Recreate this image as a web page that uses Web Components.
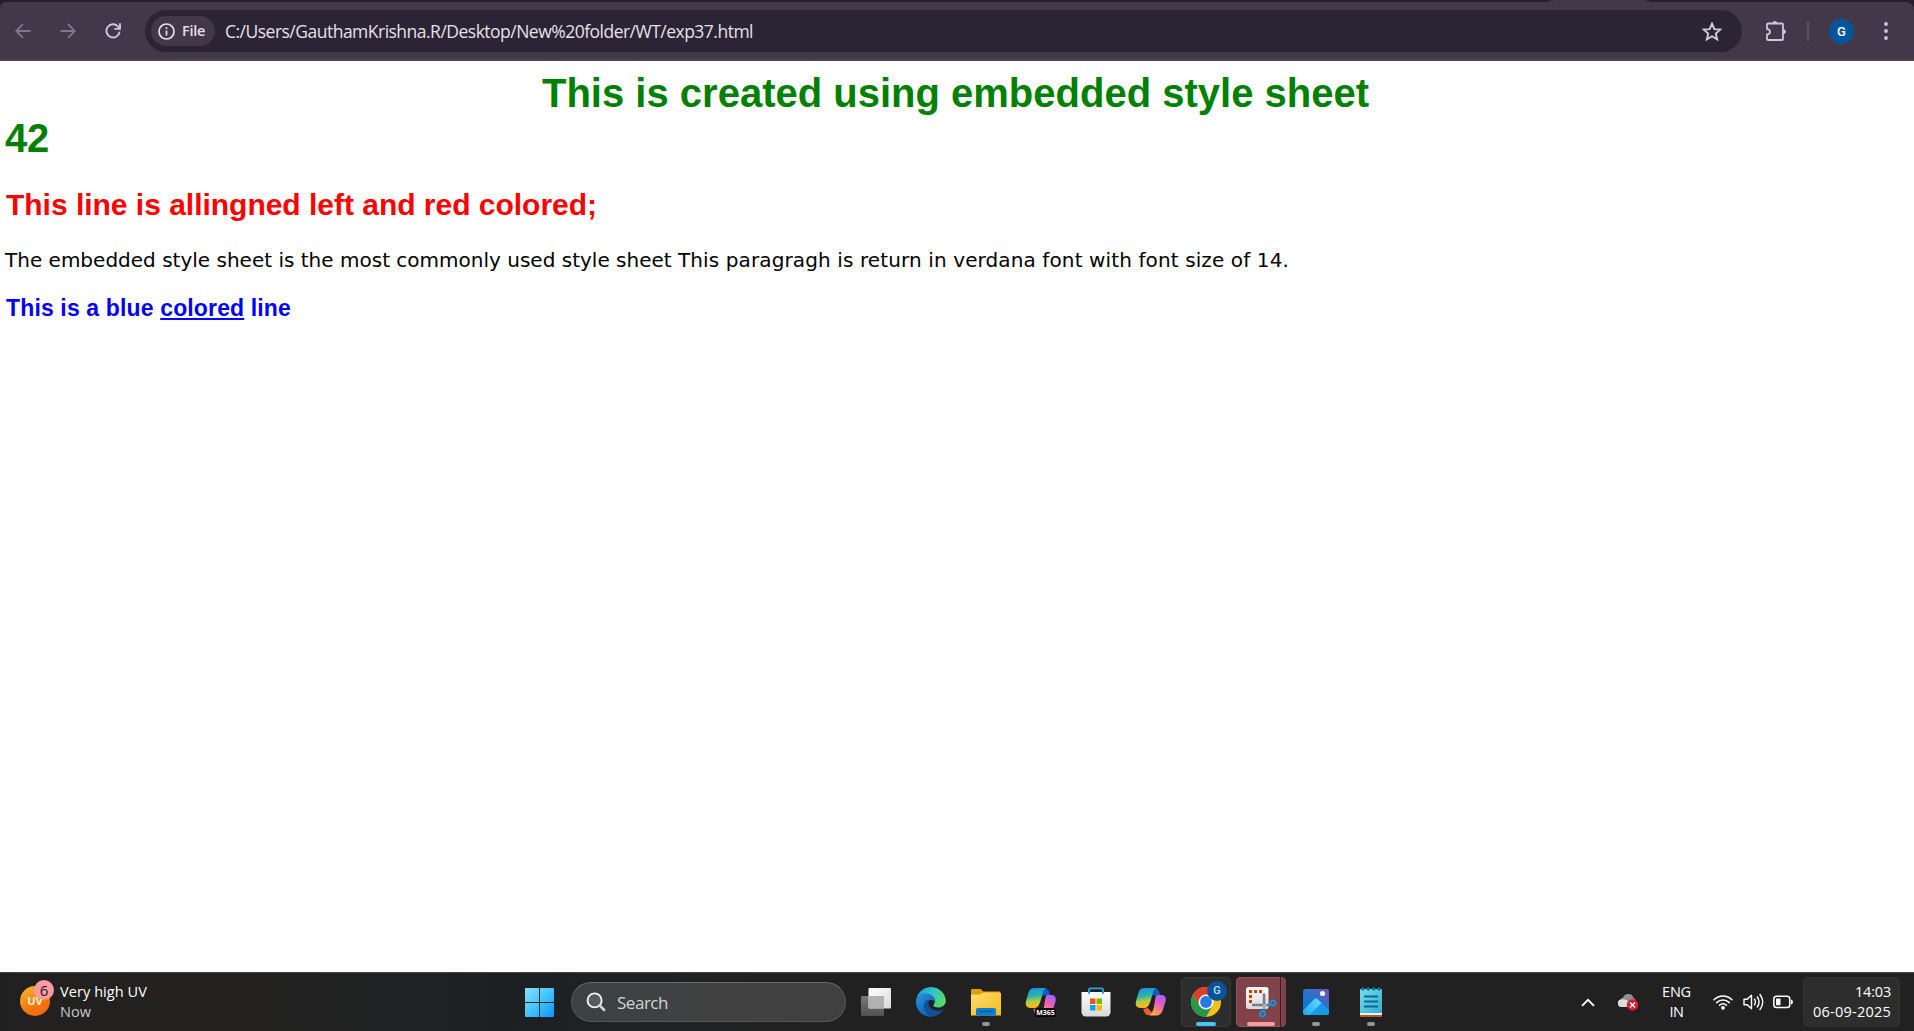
<!DOCTYPE html>
<html lang="en">
<head>
<meta charset="utf-8">
<title>exp37.html</title>
<style>
html,body{margin:0;height:100%;overflow:hidden;background:#fff}
</style>
</head>
<body>
<desktop-screen></desktop-screen>
<script>
const define = (name, html, after) => customElements.define(name, class extends HTMLElement {
  connectedCallback() {
    if (this.shadowRoot) return;
    const root = this.attachShadow({mode: 'open'});
    root.innerHTML = typeof html === 'function' ? html(this) : html;
    if (after) after(this, root);
  }
});

/* Text whose tracking is adjusted so that the run takes the width "w". */
define('tracked-text', el => `<style>:host{display:block;white-space:pre;width:${el.getAttribute('w')}px;flex:none}span{display:inline-block}</style><span><slot></slot></span>`,
(el, root) => {
  const span = root.querySelector('span'), w = +el.getAttribute('w');
  const fit = () => {
    span.style.letterSpacing = '0';
    const n = el.textContent.length;
    span.style.letterSpacing = ((w - span.getBoundingClientRect().width) / n).toFixed(4) + 'px';
  };
  requestAnimationFrame(fit);
});

const icons = {
back: ['0 0 16 16', `<path d="M15.5 8H1.5M8 1.2L1.2 8l6.8 6.8" fill="none" stroke="#81768a" stroke-width="1.8"/>`],
forward: ['0 0 16 16', `<path d="M.5 8h14M8 1.2L14.8 8 8 14.8" fill="none" stroke="#81768a" stroke-width="1.8"/>`],
reload: ['0 0 16 16', `<path d="M14.6 8.6A6.6 6.6 0 1 1 12.9 3.4L15 5.5" fill="none" stroke="#cfc4dc" stroke-width="1.9"/><path d="M15 .3v5.6H9.4" fill="none" stroke="#cfc4dc" stroke-width="1.9"/>`],
info: ['0 0 17 17', `<circle cx="8.5" cy="8.5" r="7.5" fill="none" stroke="#e6dfeb" stroke-width="1.7"/><path d="M8.5 7.5v5M8.5 4.3v1.8" stroke="#e6dfeb" stroke-width="1.7"/>`],
star: ['0 0 20 19', `<path d="M10 1.6l2.35 5.5 5.95.5-4.5 3.95 1.35 5.85L10 14.3l-5.15 3.1L6.2 11.55 1.7 7.6l5.95-.5z" fill="none" stroke="#d2cad8" stroke-width="1.9" stroke-linejoin="miter"/>`],
puzzle: ['0 0 22 22', `<path d="M2 4.500a1 1 0 0 1 1-1H17a1 1 0 0 1 1 1V19a1 1 0 0 1-1 1H3a1 1 0 0 1-1-1v-4.500c4-.5 4-5 0-5.500z" fill="none" stroke="#cfc4dc" stroke-width="1.8" stroke-linejoin="round"/><path d="M7.500 3.200a2.300 2.300 0 0 1 4.600 0zM18.500 9.300a2.400 2.400 0 0 1 0 4.800z" fill="#cfc4dc"/>`],
dots: ['0 0 4 18', `<g fill="#cfc4dc"><circle cx="2" cy="2" r="1.9"/><circle cx="2" cy="9" r="1.9"/><circle cx="2" cy="16" r="1.9"/></g>`],
start: ['0 0 29 29', `<linearGradient id="g" x1="0" y1="0" x2="29" y2="29" gradientUnits="userSpaceOnUse"><stop stop-color="#89dfff"/><stop offset=".5" stop-color="#42c4ff"/><stop offset="1" stop-color="#0a95fa"/></linearGradient><path fill="url(#g)" d="M1 0h13v14H0V1a1 1 0 0 1 1-1zm14 0h13a1 1 0 0 1 1 1v13H15zM0 15h14v14H1a1 1 0 0 1-1-1zm15 0h14v13a1 1 0 0 1-1 1H15z"/>`],
search: ['0 0 20 20', `<circle cx="8.6" cy="8.4" r="7" fill="#8a8d90" fill-opacity=".35" stroke="#f1f1f1" stroke-width="1.9"/><path d="M13.6 13.4l4.6 4.6" stroke="#d7d7d7" stroke-width="2.5" stroke-linecap="round"/>`],
taskview: ['0 0 50 50', `<linearGradient id="a" x1="0" y1="0" x2="1" y2="1"><stop stop-color="#fff"/><stop offset="1" stop-color="#d9d9d9"/></linearGradient><linearGradient id="b" x1="0" y1="0" x2="0" y2="1"><stop stop-color="#777"/><stop offset="1" stop-color="#525252"/></linearGradient><rect x="10" y="19" width="23" height="20" rx="1" fill="url(#b)"/><rect x="17.5" y="11" width="22.5" height="20.5" rx="1" fill="url(#a)"/><path d="M18 19h15v12H18z" fill="#b2b2b2"/>`],
edge: ['0 0 50 50', `<defs><linearGradient id="a" x1="10" y1="12" x2="40" y2="27" gradientUnits="userSpaceOnUse"><stop stop-color="#229bd9"/><stop offset=".45" stop-color="#2dc1cf"/><stop offset="1" stop-color="#64dd51"/></linearGradient><linearGradient id="b" x1="10" y1="20" x2="28" y2="40" gradientUnits="userSpaceOnUse"><stop stop-color="#2490df"/><stop offset="1" stop-color="#0756a7"/></linearGradient><clipPath id="c"><circle cx="25" cy="25" r="15"/></clipPath></defs><g clip-path="url(#c)"><path d="M10 24C11 14 17 10 25 10c9 0 15 6 15 13 0 5-4 7.5-8 7.5-4.5 0-5.5-1.7-4-3.4 3-4-1-8.3-6-8.3-5 0-9.500 2-12 5.500z" fill="url(#a)"/><path d="M10 25c0-7 6-9.500 11-8.500 6 1 8.500 4 7.500 8.500-2-3.500-8-3-9.500 1.500-1.500 5 2 11 8 13.500h-17z" fill="url(#b)"/><path d="M21 23c-3 2-4.500 6-2 10.500C21 38 25 40 29 40l9-6.600c.5-.9-.3-1.400-1-.9-6 3-14 0-14.500-5.500-.1-1.500.4-2.800 1.200-4z" fill="#114f9b"/></g>`],
folder: ['0 0 50 50', `<linearGradient id="a" x1="0" y1="0" x2="1" y2="1"><stop stop-color="#ffdc70"/><stop offset="1" stop-color="#f8b916"/></linearGradient><path d="M10 13a1 1 0 0 1 1-1h8.500l3 2.500H39V25H10z" fill="#dda105"/><path d="M10 17.500h9.500l3-2H39a1 1 0 0 1 1 1V38.500H10z" fill="url(#a)"/><path d="M15 38.500V33a2 2 0 0 1 2-2h16a2 2 0 0 1 2 2v5.500z" fill="#087fd3"/><path d="M18.500 34.500h13" stroke="#05579b" stroke-width="1.200" stroke-linecap="round"/>`],
copilot: ['0 0 50 50', `<linearGradient id="a" x1="0" y1="0" x2=".15" y2="1"><stop stop-color="#168bf0"/><stop offset=".45" stop-color="#2db5a1"/><stop offset=".72" stop-color="#b7cc42"/><stop offset="1" stop-color="#ffb515"/></linearGradient><linearGradient id="b" x1=".8" y1="0" x2=".3" y2="1"><stop stop-color="#9b68ed"/><stop offset=".4" stop-color="#e35ac5"/><stop offset=".75" stop-color="#ff886e"/><stop offset="1" stop-color="#ffae59"/></linearGradient><path d="M26 11c5 0 6.500 1 7.500 5l.7 2.500h-8L21 31z" fill="#155bc8"/><path d="M17 32l5-1 6 7h-5c-4 0-4-2-6-6z" fill="#ee602b"/><path d="M19 11h11c-2.200 1-3 4-4 7.500-1.500 6-3 12.500-7.500 12.500h-4c-4 0-5.500-3-4.500-7l2.500-8.500C13.600 12.200 15.500 11 19 11z" fill="url(#a)"/><path d="M31 18h5c3 0 4.500 3 3.500 6.500L37 32.500c-1.300 4-3.500 6-7 6h-7c2.700-.8 3.800-4.500 4.800-8C29 25.500 29 19 31 18z" fill="url(#b)"/>`],
store: ['0 0 50 50', `<linearGradient id="a" x1="0" y1="0" x2="0" y2="1"><stop stop-color="#fff"/><stop offset="1" stop-color="#d8d8d8"/></linearGradient><path d="M10.500 15h29v20a4.500 4.500 0 0 1-4.500 4.500H15a4.500 4.500 0 0 1-4.500-4.500z" fill="url(#a)"/><path d="M18 17v-4.500a1.200 1.200 0 0 1 1.200-1.200h11.600a1.200 1.200 0 0 1 1.200 1.200V17" fill="none" stroke="#20a8e8" stroke-width="1.800"/><path fill="#f25022" d="M19 21.500h5.500V27H19z"/><path fill="#7fba00" d="M25.500 21.500H31V27h-5.500z"/><path fill="#00a4ef" d="M19 28h5.500v5.500H19z"/><path fill="#ffb900" d="M25.500 28H31v5.500h-5.500z"/>`],
chrome: ['0 0 50 50', `<circle cx="25" cy="25" r="15" fill="#fbc016"/><path d="M12 17.500A15 15 0 0 0 25 40l6.500-11.250L25 32.500l-6.500-3.750z" fill="#229a4b"/><path d="M12 17.500a15 15 0 0 1 26 0H25l-6.500 11.250z" fill="#e33b2e"/><circle cx="25" cy="25" r="7.500" fill="#fff"/><circle cx="25" cy="25" r="5.900" fill="#2878e7"/>`],
snip: ['0 0 50 50', `<linearGradient id="a" x1="0" y1="0" x2="0" y2="1"><stop stop-color="#fbfbfb"/><stop offset="1" stop-color="#d8dadd"/></linearGradient><rect x="10" y="10" width="22.500" height="22" rx="2.500" fill="url(#a)"/><g fill="#d83b01"><path d="M13 13h3v3h-3zM18 13h3v3h-3zM23 13h3v3h-3zM13 18h3v3h-3zM13 23h3v3h-3z"/></g><path d="M28 16.500l.2 14M16 28h18.500" stroke="#788089" stroke-width="2.600"/><path d="M28 27v7M27 28h7" stroke="#a6adb5" stroke-width="2"/><circle cx="26.500" cy="37" r="2.500" fill="none" stroke="#1593df" stroke-width="1.900"/><circle cx="37" cy="26" r="2.500" fill="none" stroke="#1593df" stroke-width="1.900"/><path d="M28 31.500v4M31 28h4" stroke="#1593df" stroke-width="2"/>`],
photos: ['0 0 50 50', `<linearGradient id="a" x1="0" y1="1" x2="1" y2="0"><stop stop-color="#0577cf"/><stop offset=".55" stop-color="#2d72cd"/><stop offset="1" stop-color="#7452b5"/></linearGradient><linearGradient id="b" x1="0" y1="1" x2="1" y2="0"><stop stop-color="#1ba5ee"/><stop offset="1" stop-color="#64e0fb"/></linearGradient><clipPath id="c"><rect x="12" y="12" width="26" height="26" rx="2.500"/></clipPath><g clip-path="url(#c)"><path fill="url(#a)" d="M12 12h26v26H12z"/><path d="M23 22.500q2-2 4 0L40 35.500V40H12z" fill="#169be9"/><path d="M23 22.500q2-2 4 0l3.500 3.500L18 38.500h-6v-5z" fill="url(#b)"/></g><circle cx="31.500" cy="16.500" r="2.600" fill="#eef2ff"/>`],
notepad: ['0 0 50 50', `<linearGradient id="a" x1="0" y1="0" x2="1" y2="1"><stop stop-color="#78def0"/><stop offset="1" stop-color="#35acd0"/></linearGradient><path d="M14 36h22v4H14z" fill="#b35d18"/><path d="M14 34h22v4H14z" fill="#eee"/><rect x="14" y="12" width="22" height="24" rx="1" fill="url(#a)"/><path d="M18 19.500h14M18 24.500h14M18 29.500h14" stroke="#086b91" stroke-width="1.800"/><g fill="#087ba5"><circle cx="17" cy="12" r="1.700"/><circle cx="22.300" cy="12" r="1.700"/><circle cx="27.700" cy="12" r="1.700"/><circle cx="33" cy="12" r="1.700"/></g>`],
chevron: ['0 0 14 9', `<path d="M1 7.800l6-6 6 6" fill="none" stroke="#fff" stroke-width="1.900"/>`],
cloud: ['0 0 21 17', `<path d="M5 3.500A5.500 5.500 0 0 1 15.500 4c2 .5 2.500 3 2 5l-12 4H3.500A3.500 3.500 0 0 1 1.500 7C2 5 3.500 4 5 3.500z" fill="#8f8f8f"/><path d="M3.500 5.500C7 4.500 9 7 12 7.500L14 13H3.500A3.500 3.500 0 0 1 3.500 5.500z" fill="#ddd"/><circle cx="14.500" cy="11" r="5.800" fill="#d91e31"/><path d="M12 8.500l5 5m0-5l-5 5" stroke="#fff" stroke-width="1.400"/>`],
wifi: ['0 0 20 16', `<g fill="none" stroke="#fff" stroke-width="1.500" stroke-linecap="round"><path d="M1 5.800a12.700 12.700 0 0 1 18 0"/><path d="M3.700 8.600a8.900 8.900 0 0 1 12.600 0"/><path d="M6.500 11.300a5 5 0 0 1 7 0"/></g><circle cx="10" cy="13.800" r="1.900" fill="#fff"/>`],
volume: ['0 0 21 18', `<g fill="none" stroke="#fff" stroke-width="1.400" stroke-linejoin="round" stroke-linecap="round"><path d="M1 6.300h3.200L8.500 2.200v13.600L4.200 11.700H1z"/><path d="M11.500 6.200q1.800 2.800 0 5.600M14.300 4q3.500 5 0 10M17 1.500q5.500 7.500 0 15"/></g>`],
battery: ['0 0 20 13', `<rect x=".8" y=".8" width="16" height="11.200" rx="2.800" fill="none" stroke="#fff" stroke-width="1.500"/><rect x="3" y="3" width="4.500" height="6.800" rx=".8" fill="#fff"/><path d="M18 4v5q2-.5 2-2.500T18 4z" fill="#fff"/>`]
};
define('ui-icon', el => { const i = icons[el.getAttribute('name')];
  return `<style>:host{display:block;flex:none;width:${el.getAttribute('w')}px;height:${el.getAttribute('h')}px}svg{display:block;width:100%;height:100%}</style><svg viewBox="${i[0]}">${i[1]}</svg>`; });

define('browser-toolbar', `<style>
:host{display:block;height:61px;box-sizing:border-box;padding-top:2px;background:#261d2e;font-family:"Open Sans","Noto Sans",sans-serif;position:relative}
.bar{height:59px;box-sizing:border-box;border-bottom:2px solid #4c454f;background:#42384a;border-radius:6px 8px 0 0;display:flex;align-items:center;padding:2px 0 1px 15px}
.nav{display:flex;gap:29px;width:130px;flex:none}
.omni{width:1597px;flex:none;height:42px;border-radius:21px;background:#2b2434;box-sizing:border-box;padding:0 20px 0 6px;display:flex;align-items:center}
.chip{width:64px;height:30px;border-radius:15px;background:#42384a;display:flex;align-items:center;gap:7px;padding-left:7px;box-sizing:border-box;color:#e6dfeb;font-size:14.500px;font-weight:600;line-height:30px}
.url{margin-left:10px;color:#e6e0ea;font-size:17.500px;line-height:30px;flex:1}
.tail{display:flex;align-items:center;margin-left:23px;flex:none}
.sep{width:2px;height:20px;background:#5a5062;margin:0 20px;border-radius:1px}
.av{width:25px;height:25px;border-radius:50%;background:#00569c;color:#fff;font:500 13px/25px Roboto,sans-serif;text-align:center;margin-right:30px}
.tab{position:absolute;left:1546px;top:0;width:106px;height:2px;background:#42384a;clip-path:polygon(8px 0,98px 0,100% 100%,0 100%)}
</style>
<div class="bar"><div class="nav"><ui-icon name="back" w="16" h="16"></ui-icon><ui-icon name="forward" w="16" h="16"></ui-icon><ui-icon name="reload" w="16" h="16"></ui-icon></div>
<div class="omni"><div class="chip"><ui-icon name="info" w="17" h="17"></ui-icon><tracked-text w="23">File</tracked-text></div><div class="url"><tracked-text w="528">C:/Users/GauthamKrishna.R/Desktop/New%20folder/WT/exp37.html</tracked-text></div><ui-icon name="star" w="20" h="19"></ui-icon></div>
<div class="tail"><ui-icon name="puzzle" w="22" h="22"></ui-icon><div class="sep"></div><div class="av">G</div><ui-icon name="dots" w="4" h="18"></ui-icon></div></div><div class="tab"></div>`);

define('styled-document', `<style>
:host{display:block;height:911px;background:#fff;box-sizing:border-box;padding:10px 5px 0;font-family:"Liberation Sans",Arial,sans-serif}
h1,h2,h4,p{margin:0}
h1{color:green;font-size:40px;line-height:45px}
.c{display:flex;justify-content:center;padding-right:3px}
h2{color:red;font-size:30px;line-height:34px;margin:27px 0 0 1px}
p{display:flex;font-family:Verdana,"DejaVu Sans",sans-serif;font-size:20px;line-height:26px;margin-top:25px;color:#000}
h4{color:#00f;font-size:23px;line-height:26px;margin:22px 0 0 1px}
u{text-decoration-thickness:2px;text-underline-offset:2px}
</style>
<h1><div class="c"><tracked-text w="827">This is created using embedded style sheet</tracked-text></div><tracked-text w="44">42</tracked-text></h1>
<h2><tracked-text w="591">This line is allingned left and red colored;</tracked-text></h2>
<p><tracked-text w="673">The embedded style sheet is the most commonly used style sheet </tracked-text><tracked-text w="611">This paragragh is return in verdana font with font size of 14.</tracked-text></p>
<h4><tracked-text w="285">This is a blue <u>colored</u> line</tracked-text></h4>`);

define('task-button', el => `<style>
:host{display:flex;flex:none;width:55px;height:58px;justify-content:center;align-items:center}
.tile{position:relative;width:50px;height:50px;box-sizing:border-box;border-radius:5px}
.active{background:#2e2d2d;box-shadow:inset 0 0 0 1px #393838}
.alert{background:#804349;box-shadow:inset 0 0 0 1px #92555b}
.alert::after{content:"";position:absolute;left:44px;top:0;width:5px;height:50px;border-left:1px solid #342427;border-radius:0 5px 5px 0;background:#804349}
.mark{position:absolute;bottom:1px;left:50%;height:4px;border-radius:2px;transform:translateX(-50%);width:8px;background:#959595}
.active .mark{width:20px;background:#4cc2ff}.alert .mark{width:28px;background:#ff99a4}
</style><div class="tile ${el.getAttribute('state') || ''}"><ui-icon name="${el.getAttribute('icon')}" w="50" h="50"></ui-icon>${el.hasAttribute('open') ? '<div class="mark"></div>' : ''}<slot></slot></div>`);

define('task-bar', `<style>
:host{display:flex;height:59px;box-sizing:border-box;border-top:1px solid #484848;background:linear-gradient(90deg,#212020 0,#242220 170px,#212121 320px,#1d2022 500px,#1e2225 620px,#212121 760px,#212121);color:#fff;font-family:"Open Sans","Noto Sans",sans-serif;font-size:14.500px;line-height:20px;align-items:center}
.weather{display:flex;width:525px;flex:none;align-items:center}
.uv{position:relative;margin-left:20px;width:30px;height:30px;border-radius:50%;background:linear-gradient(150deg,#f5b735,#f5730b 65%,#ee650a);font:700 11px/30px "Open Sans",sans-serif;text-align:center;color:#fff0cf;margin-right:10px;margin-top:-3px}
.six{position:absolute;left:14px;top:-6px;width:20px;height:20px;border-radius:50%;background:#ff99a4;color:#241c1e;font:15px/20px "Open Sans",sans-serif}
.sub{color:#c8c8c8}
.lines{height:40px;margin-top:-1px}
.search{width:275px;flex:none;height:40px;border-radius:20px;box-sizing:border-box;border:1px solid #545555;border-top-color:#686a6b;margin-left:17px;background:linear-gradient(90deg,#3b4144,#414141 50%,#404040);display:flex;align-items:center;padding-left:14px;gap:11px;font-size:17px;color:#d4d4d4;line-height:30px}
.search tracked-text{padding-top:1px}
.apps{display:flex;margin-left:2.500px;width:550px;flex:none}
.b{position:absolute;left:26px;top:4px;width:20px;height:20px;border-radius:50%;background:#07549a;color:#c5dff7;font:500 11px/20px Roboto,sans-serif;text-align:center}
.m{position:absolute;left:19px;top:31px;width:21px;height:9px;border-radius:2px;background:#080808;color:#fff;font:700 7px/9px "Open Sans",sans-serif;text-align:center}
.tray{display:flex;align-items:center;margin-left:182.500px;flex:none}
.tray .lines{margin-top:0}
.clock{width:97px;height:50px;border-radius:5px;background:#2d2d2d;box-shadow:inset 0 0 0 1px #323232;margin-left:10px;box-sizing:border-box;padding:5px 9px 0 0;display:flex;flex-direction:column;align-items:flex-end}
</style>
<div class="weather"><div class="uv">UV<div class="six">6</div></div><div class="lines"><tracked-text w="87">Very high UV</tracked-text><tracked-text w="31" class="sub">Now</tracked-text></div></div>
<ui-icon name="start" w="29" h="29"></ui-icon>
<div class="search"><ui-icon name="search" w="20" h="20"></ui-icon><tracked-text w="51">Search</tracked-text></div>
<div class="apps"><task-button icon="taskview"></task-button><task-button icon="edge"></task-button><task-button icon="folder" open></task-button><task-button icon="copilot"><div class="m">M365</div></task-button><task-button icon="store"></task-button><task-button icon="copilot"></task-button><task-button icon="chrome" state="active" open><div class="b">G</div></task-button><task-button icon="snip" state="alert" open></task-button><task-button icon="photos" open></task-button><task-button icon="notepad" open></task-button></div>
<div class="tray"><ui-icon name="chevron" w="14" h="9"></ui-icon><ui-icon name="cloud" w="21" h="17" style="margin-left:23px"></ui-icon>
<div class="lines" style="margin-left:23px;display:flex;flex-direction:column;align-items:center"><tracked-text w="29">ENG</tracked-text><tracked-text w="14">IN</tracked-text></div>
<ui-icon name="wifi" w="20" h="16" style="margin-left:22px"></ui-icon><ui-icon name="volume" w="21" h="18" style="margin-left:10px"></ui-icon><ui-icon name="battery" w="20" h="14" style="margin-left:9px"></ui-icon>
<div class="clock"><tracked-text w="36">14:03</tracked-text><tracked-text w="78">06-09-2025</tracked-text></div></div>`);

define('desktop-screen', `<style>:host{display:flex;flex-direction:column;width:1914px;height:1031px;overflow:hidden}</style><browser-toolbar></browser-toolbar><styled-document></styled-document><task-bar></task-bar>`);
</script>
</body>
</html>
